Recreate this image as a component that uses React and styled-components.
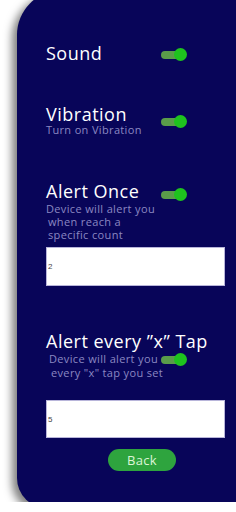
import React from "react";
import styled, { createGlobalStyle } from "styled-components";

const GlobalStyle = createGlobalStyle`
    html, body {
        margin: 0;
        padding: 0;
        background: #ffffff;
        overflow: hidden;
    }
`;

const Toggle = ({ top }) => (
    <Switch $top={top}>
        <Track />
        <Knob />
    </Switch>
);

const App = () => {
    return (
        <Page>
            <GlobalStyle />
            <Panel>
                <Row $top={52}>
                    <TextCol>
                        <Title>Sound</Title>
                    </TextCol>
                    <Toggle top={6} />
                </Row>

                <Row $top={39}>
                    <TextCol>
                        <Title>Vibration</Title>
                        <Sub $mt={-2}>Turn on Vibration</Sub>
                    </TextCol>
                    <Toggle top={12} />
                </Row>

                <Row $top={44}>
                    <TextCol>
                        <Title>Alert Once</Title>
                        <Sub>
                            Device will alert you<br />
                            <Indent>when reach a</Indent><br />
                            <Indent>specific count</Indent>
                        </Sub>
                    </TextCol>
                    <Toggle top={8} />
                </Row>

                <Field defaultValue="2" $mt={6} $h={39} />

                <Section $top={44}>
                    <Title>Alert every ”x” Tap</Title>
                    <Row $top={0}>
                        <TextCol $pad={3}>
                            <Sub $lh={14}>
                                Device will alert you<br />
                                <Indent>every "x" tap you set</Indent>
                            </Sub>
                        </TextCol>
                        <Toggle top={1} />
                    </Row>
                </Section>

                <Field defaultValue="5" $mt={20} $h={38} />

                <BackButton>Back</BackButton>
            </Panel>
        </Page>
    );
};

export default App;

const Page = styled.div`
    width: 236px;
    height: 512px;
    padding-left: 17px;
    box-sizing: border-box;
    font-family: "Open Sans", "Noto Sans", sans-serif;
`;

const Panel = styled.div`
    margin-top: -10px;
    width: 260px;
    height: 518px;
    box-sizing: border-box;
    padding-left: 29px;
    background: #080559;
    border-radius: 45px 0 0 30px;
    box-shadow: -5px 4px 9px rgba(0, 0, 0, 0.5);
    display: flex;
    flex-direction: column;
    align-items: flex-start;
`;

const Row = styled.div`
    display: flex;
    align-items: flex-start;
    margin-top: ${(p) => p.$top}px;
`;

const Section = styled.div`
    display: flex;
    flex-direction: column;
    margin-top: ${(p) => p.$top}px;
`;

const TextCol = styled.div`
    width: ${(p) => 115 - (p.$pad || 0)}px;
    padding-left: ${(p) => p.$pad || 0}px;
    display: flex;
    flex-direction: column;
`;

const Title = styled.div`
    color: #ffffff;
    font-size: 18px;
    line-height: 22px;
    letter-spacing: 0.5px;
    white-space: nowrap;
`;

const Sub = styled.div`
    color: #8b88c2;
    font-size: 11px;
    line-height: ${(p) => p.$lh || 13}px;
    margin-top: ${(p) => p.$mt || 0}px;
    letter-spacing: 0.35px;
    white-space: nowrap;
`;

const Indent = styled.span`
    padding-left: 2px;
`;

const Switch = styled.div`
    display: flex;
    align-items: center;
    margin-top: ${(p) => p.$top}px;
`;

const Track = styled.span`
    width: 22px;
    height: 8px;
    border-radius: 4px;
    background: #5a9c4a;
`;

const Knob = styled.span`
    width: 13px;
    height: 13px;
    margin-left: -9px;
    border-radius: 50%;
    background: #1ec31e;
`;

const Field = styled.input`
    margin-top: ${(p) => p.$mt}px;
    width: 179px;
    height: ${(p) => p.$h}px;
    box-sizing: border-box;
    border: 1px solid #b8b5da;
    background: #ffffff;
    padding: 0 0 0 1px;
    font-family: "Liberation Sans", Arial, sans-serif;
    font-size: 8px;
    color: #444444;
    outline: none;
`;

const BackButton = styled.button`
    margin-top: 11px;
    margin-left: 62px;
    width: 68px;
    height: 22px;
    border: none;
    border-radius: 11px;
    background: #2ea43e;
    color: #dcf5d6;
    font-family: "Open Sans", "Noto Sans", sans-serif;
    font-size: 13px;
    letter-spacing: 0.3px;
    line-height: 22px;
    padding: 0;
    cursor: pointer;
`;
